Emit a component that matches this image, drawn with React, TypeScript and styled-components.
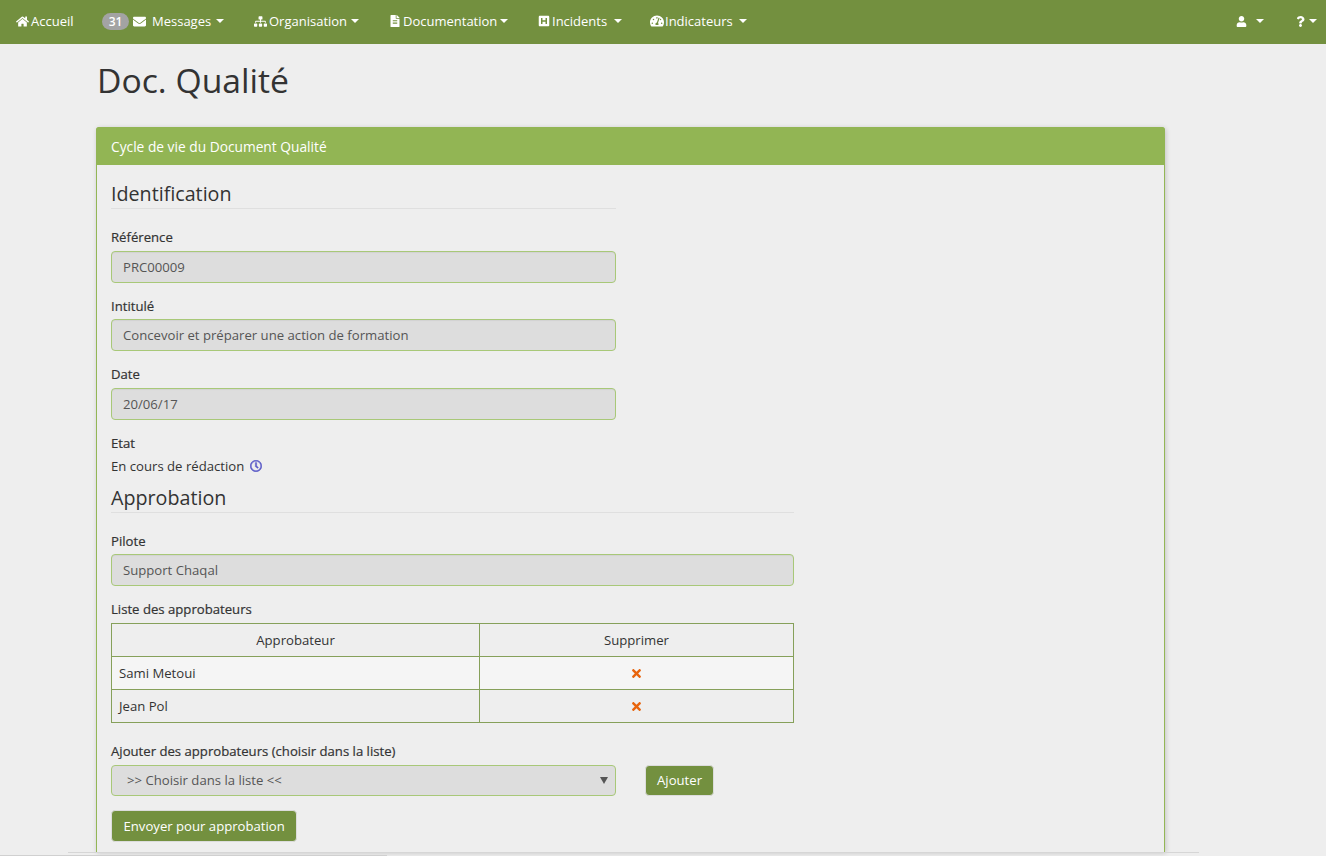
import React from "react";
import styled, { createGlobalStyle } from "styled-components";
import {
  FaHome, FaEnvelope, FaSitemap, FaFileAlt, FaHSquare, FaTachometerAlt, FaUser, FaQuestion, FaTimes, FaRegClock,
} from "react-icons/fa";

const Global = createGlobalStyle`
  html, body { margin: 0; padding: 0; height: 100%; overflow: hidden; background: #eeeeee; }
  body { font-family: "Open Sans", "DejaVu Sans", sans-serif; font-size: 13.15px; line-height: 18.57px; color: #333; }
  * { box-sizing: border-box; }
`;

const Navbar = styled.nav`
  height: 44px;
  background: #73903f;
  display: flex;
  align-items: center;
  justify-content: space-between;
  padding-bottom: 2px;
  color: #fff;
`;
const NavGroup = styled.div`
  display: flex;
  align-items: center;
`;
const NavItem = styled.a<{ $w: number; $pl?: number; $gap?: number }>`
  width: ${(p) => p.$w}px;
  padding-left: ${(p) => p.$pl ?? 0}px;
  display: flex;
  align-items: center;
  gap: ${(p) => p.$gap ?? 2}px;
  color: #fff;
  white-space: nowrap;
  font-size: 13px;
  svg { flex: none; }
`;
const Badge = styled.span`
  width: 27px;
  height: 17px;
  border-radius: 9px;
  background: #a3a3a3;
  color: #fff;
  font-size: 12px;
  font-weight: 600;
  line-height: 17px;
  text-align: center;
  margin-right: 4px;
`;
const EnvelopeLabel = styled.span`
  margin-left: 6px;
`;
const Caret = styled.i<{ $ml?: number }>`
  display: inline-block;
  margin-left: ${(p) => p.$ml ?? 2}px;
  width: 0;
  height: 0;
  border-top: 4px solid #fff;
  border-left: 4px solid transparent;
  border-right: 4px solid transparent;
`;
const Page = styled.main`
  padding: 0 161px 0 96px;
`;
const Title = styled.h1`
  margin: 13px 0 24px 1px;
  font-size: 33.7px;
  line-height: 46px;
  font-weight: 400;
  color: #333;
`;
const Panel = styled.section`
  border: 1px solid #93b655;
  border-bottom: 0;
  border-radius: 4px 4px 0 0;
  box-shadow: 1px 1px 5px rgba(0, 0, 0, 0.18);
  height: 725px;
  overflow: visible;
  background: #eeeeee;
`;
const PanelHead = styled.header`
  height: 38px;
  margin: -1px -1px 0;
  padding: 0 15px;
  background: #92b554;
  border-radius: 3px 3px 0 0;
  color: #fff;
  font-size: 13.75px;
  line-height: 40px;
`;
const PanelBody = styled.div`
  padding: 15px 14px;
`;
const Narrow = styled.div<{ $w: number }>`
  width: ${(p) => p.$w}px;
`;
const SectionTitle = styled.h2`
  margin: 0 0 18.2px;
  height: 29px;
  border-bottom: 1px solid #dfdfdf;
  font-size: 19.7px;
  line-height: 27px;
  font-weight: 400;
  color: #333;
`;
const Label = styled.label`
  display: block;
  height: 18.57px;
  line-height: 20.57px;
  margin-bottom: 5px;
  font-weight: 500;
  color: #333;
  -webkit-text-stroke: 0.2px #333;
`;
const Field = styled.div`
  height: 32px;
  margin-bottom: 13px;
  padding: 0 11px;
  background: #dddddd;
  border: 1px solid #a8c878;
  border-radius: 4px;
  color: #555;
  line-height: 30px;
  box-shadow: inset 0 1px 1px rgba(0, 0, 0, 0.05);
`;
const StateLine = styled.div`
  display: flex;
  align-items: center;
  gap: 6px;
  height: 18px;
  padding-top: 2px;
  margin-bottom: 9.2px;
  color: #333;
  svg { color: #5a5ac8; stroke: #5a5ac8; stroke-width: 20px; }
`;
const Table = styled.table`
  width: 683px;
  border-collapse: collapse;
  margin-bottom: 18.5px;
  table-layout: fixed;
  th, td {
    height: 33px;
    border: 1px solid #86a05a;
    padding: 0 7px;
    color: #333;
  }
  th { font-weight: 400; text-align: center; background: #eeeeee; }
  tbody tr:nth-child(odd) td { background: #f5f5f5; }
`;
const FirstCol = styled.col`
  width: 368px;
`;
const DeleteCell = styled.td`
  text-align: center;
  && { color: #e8640c; }
  svg { vertical-align: -2px; }
`;
const AddRow = styled.div`
  display: flex;
  align-items: center;
  gap: 29px;
  margin-bottom: 14px;
`;
const Select = styled.div`
  width: 505px;
  height: 31px;
  padding: 0 7px 0 15px;
  background: #dddddd;
  border: 1px solid #a8c878;
  border-radius: 4px;
  color: #555;
  display: flex;
  align-items: center;
  justify-content: space-between;
`;
const SelectArrow = styled.i`
  width: 0;
  height: 0;
  border-top: 7px solid #555;
  border-left: 4px solid transparent;
  border-right: 4px solid transparent;
`;
const Button = styled.button<{ $h: number; $px: number; $pb?: number }>`
  height: ${(p) => p.$h}px;
  padding: 0 ${(p) => p.$px}px ${(p) => p.$pb ?? 0}px;
  background: #73903f;
  border: 1px solid #dcdcdc;
  border-radius: 4px;
  color: #fff;
  font-family: inherit;
  font-size: 13.15px;
`;
const BottomRule = styled.div`
  position: fixed;
  left: 68px;
  width: 1131px;
  top: 852px;
  height: 1px;
  background: #d6d6d6;
`;
const BottomScroll = styled.div`
  position: fixed;
  left: 0;
  width: 387px;
  top: 855px;
  height: 1px;
  background: #d0d0d0;
`;

export default function App() {
  return (
    <>
      <Global />
      <Navbar>
        <NavGroup>
          <NavItem $w={102} $pl={16}><FaHome size={13} />Accueil</NavItem>
          <NavItem $w={152} $gap={0}><Badge>31</Badge><FaEnvelope size={13} /><EnvelopeLabel>Messages</EnvelopeLabel><Caret $ml={5} /></NavItem>
          <NavItem $w={135}><FaSitemap size={13} />Organisation<Caret /></NavItem>
          <NavItem $w={149}><FaFileAlt size={12} />Documentation<Caret $ml={1} /></NavItem>
          <NavItem $w={112}><FaHSquare size={12} />Incidents<Caret $ml={5} /></NavItem>
          <NavItem $w={110} $gap={1}><FaTachometerAlt size={14} />Indicateurs<Caret $ml={5} /></NavItem>
        </NavGroup>
        <NavGroup>
          <NavItem $w={59}><FaUser size={11} /><Caret $ml={7} /></NavItem>
          <NavItem $w={31}><FaQuestion size={11} /><Caret $ml={1} /></NavItem>
        </NavGroup>
      </Navbar>
      <Page>
        <Title>Doc. Qualité</Title>
        <Panel>
          <PanelHead>Cycle de vie du Document Qualité</PanelHead>
          <PanelBody>
            <Narrow $w={505}>
              <SectionTitle>Identification</SectionTitle>
              <Label>Référence</Label>
              <Field>PRC00009</Field>
              <Label>Intitulé</Label>
              <Field>Concevoir et préparer une action de formation</Field>
              <Label>Date</Label>
              <Field>20/06/17</Field>
              <Label>Etat</Label>
              <StateLine>En cours de rédaction <FaRegClock size={12} /></StateLine>
            </Narrow>
            <Narrow $w={683}>
              <SectionTitle>Approbation</SectionTitle>
              <Label>Pilote</Label>
              <Field>Support Chaqal</Field>
              <Label>Liste des approbateurs</Label>
              <Table>
                <colgroup><FirstCol /><col /></colgroup>
                <thead>
                  <tr><th>Approbateur</th><th>Supprimer</th></tr>
                </thead>
                <tbody>
                  <tr><td>Sami Metoui</td><DeleteCell><FaTimes size={13} /></DeleteCell></tr>
                  <tr><td>Jean Pol</td><DeleteCell><FaTimes size={13} /></DeleteCell></tr>
                </tbody>
              </Table>
              <Label>Ajouter des approbateurs (choisir dans la liste)</Label>
              <AddRow>
                <Select>&gt;&gt; Choisir dans la liste &lt;&lt;<SelectArrow /></Select>
                <Button $h={31} $px={11} $pb={1}>Ajouter</Button>
              </AddRow>
              <Button $h={32} $px={11.5}>Envoyer pour approbation</Button>
            </Narrow>
          </PanelBody>
        </Panel>
      </Page>
      <BottomRule />
      <BottomScroll />
    </>
  );
}
